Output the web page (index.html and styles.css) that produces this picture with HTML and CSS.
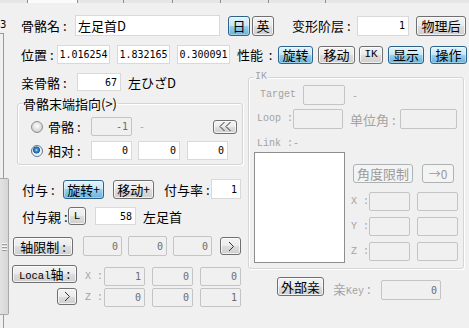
FILE: index.html
```html
<!DOCTYPE html>
<html lang="ja">
<head>
<meta charset="utf-8">
<title>骨骼</title>
<link rel="stylesheet" href="styles.css">
</head>
<body>
<div class="tabs">
  <div class="tab t0"></div><div class="tab sel t1"></div><div class="tab t2"></div><div class="tab t3"></div><div class="tab t4"></div><div class="tab t5"></div><div class="tab t6"></div><div class="tab t7"></div>
</div>
<div class="page">
  <div class="edge">
    <div class="edge-top"><span>3</span></div>
    <div class="edge-line seg-a"></div>
    <div class="edge-thumb"><i></i><i></i><i></i></div>
    <div class="edge-line seg-b"></div>
  </div>
  <div class="main">
    <div class="row r1">
      <span class="lbl l-name">骨骼名 :</span>
      <input class="tb txt w-name" value="左足首D" readonly>
      <button class="btn on b-ri">日</button>
      <button class="btn b-ei">英</button>
      <span class="lbl l-layer">变形阶层 :</span>
      <input class="tb w-layer" value="1" readonly>
      <button class="btn b-phys">物理后</button>
    </div>
    <div class="row r2">
      <span class="lbl l-pos">位置 :</span>
      <input class="tb w-pos" value="1.016254" readonly>
      <input class="tb w-pos g7" value="1.832165" readonly>
      <input class="tb w-pos g7" value="0.300091" readonly>
      <span class="lbl l-perf">性能&nbsp;&nbsp;:</span>
      <button class="btn on b-rot">旋转</button>
      <button class="btn b-mov">移动</button>
      <button class="btn b-ik">IK</button>
      <button class="btn on b-vis">显示</button>
      <button class="btn on b-op">操作</button>
    </div>
    <div class="cols">
      <div class="lcol">
        <div class="row r3">
          <span class="lbl l-parent">亲骨骼 :</span>
          <input class="tb w-parent" value="67" readonly>
          <span class="lbl after">左ひざD</span>
        </div>
        <fieldset class="grp g-tail">
          <legend>骨骼末端指向(&gt;)</legend>
          <div class="row rr1">
            <span class="radio"></span>
            <span class="lbl l-radio">骨骼 :</span>
            <input class="tb dis w41" value="-1" readonly>
            <span class="lbl dash">-</span>
            <button class="btn b-back"><svg width="14" height="11" viewBox="0 0 14 11"><path d="M6.5 1 L2 5.5 L6.5 10 M12.5 1 L8 5.5 L12.5 10" fill="none" stroke="#333" stroke-width="1"/></svg></button>
          </div>
          <div class="row rr2">
            <span class="radio checked"></span>
            <span class="lbl l-radio">相对 :</span>
            <input class="tb w41" value="0" readonly>
            <input class="tb w42 g6" value="0" readonly>
            <input class="tb w41 g7" value="0" readonly>
          </div>
        </fieldset>
        <div class="row r-fuyo">
          <span class="lbl l-fuyo">付与 :</span>
          <button class="btn on b-fr">旋转<span class="plus">+</span></button>
          <button class="btn b-fm">移动<span class="plus">+</span></button>
          <span class="lbl l-rate">付与率 :</span>
          <input class="tb w-rate" value="1" readonly>
        </div>
        <div class="row r-fpar">
          <span class="lbl l-fpar">付与親 :</span>
          <button class="btn b-l mono">L</button>
          <input class="tb w41 g9" value="58" readonly>
          <span class="lbl after">左足首</span>
        </div>
        <div class="row r-axis">
          <button class="btn b-axis">轴限制 :</button>
          <input class="tb dis w39 g10" value="0" readonly>
          <input class="tb dis w39 g6" value="0" readonly>
          <input class="tb dis w39 g6" value="0" readonly>
          <button class="btn b-next"><svg width="8" height="11" viewBox="0 0 8 11"><path d="M2 1 L6.5 5.5 L2 10" fill="none" stroke="#333" stroke-width="1"/></svg></button>
        </div>
        <div class="local">
          <div class="local-btns">
            <button class="btn b-local"><span class="btn-line"><span class="mono">Local</span>轴 :</span></button>
            <button class="btn b-lnext"><svg width="8" height="11" viewBox="0 0 8 11"><path d="M2 1 L6.5 5.5 L2 10" fill="none" stroke="#333" stroke-width="1"/></svg></button>
          </div>
          <div class="local-rows">
            <div class="row lr">
              <span class="lbl gray mono l-xyz">X :</span>
              <input class="tb dis w41" value="1" readonly>
              <input class="tb dis w41 g7" value="0" readonly>
              <input class="tb dis w41 g7" value="0" readonly>
            </div>
            <div class="row lr lr2">
              <span class="lbl gray mono l-xyz">Z :</span>
              <input class="tb dis w41" value="0" readonly>
              <input class="tb dis w41 g7" value="0" readonly>
              <input class="tb dis w41 g7" value="1" readonly>
            </div>
          </div>
        </div>
      </div>
      <div class="rcol">
        <fieldset class="grp g-ik">
          <legend class="mono">IK</legend>
          <div class="row ik-target">
            <span class="lbl gray mono l-target">Target</span>
            <input class="tb dis w42" value="" readonly>
            <span class="lbl gray dash">-</span>
          </div>
          <div class="row ik-loop">
            <span class="lbl gray mono l-loop">Loop :</span>
            <input class="tb dis w-loop" value="" readonly>
            <span class="lbl gray l-unit">单位角 :</span>
            <input class="tb dis w-unit" value="" readonly>
          </div>
          <div class="row ik-link">
            <span class="lbl gray mono l-link">Link :-</span>
          </div>
          <div class="ik-body">
            <div class="listbox"></div>
            <div class="ik-side">
              <div class="row ik-btns">
                <button class="btn off b-angle">角度限制</button>
                <button class="btn off b-zero">→0</button>
              </div>
              <div class="row ik-xyz">
                <span class="lbl gray mono l-ikx">X :</span>
                <input class="tb dis w41" value="" readonly>
                <input class="tb dis w41 g7" value="" readonly>
              </div>
              <div class="row ik-xyz">
                <span class="lbl gray mono l-ikx">Y :</span>
                <input class="tb dis w41" value="" readonly>
                <input class="tb dis w41 g7" value="" readonly>
              </div>
              <div class="row ik-xyz">
                <span class="lbl gray mono l-ikx">Z :</span>
                <input class="tb dis w41" value="" readonly>
                <input class="tb dis w41 g7" value="" readonly>
              </div>
            </div>
          </div>
        </fieldset>
        <div class="row r-ext">
          <button class="btn b-ext">外部亲</button>
          <span class="lbl gray l-key">亲<span class="mono">Key</span> :</span>
          <input class="tb dis w-key" value="0" readonly>
        </div>
      </div>
    </div>
  </div>
</div>
</body>
</html>
```

FILE: styles.css
```css
* { box-sizing: border-box; }
html, body { margin: 0; padding: 0; }
body {
  width: 469px;
  height: 328px;
  overflow: hidden;
  background: #f0f0f0;
  font-family: "Noto Sans CJK JP", "Noto Sans CJK SC", sans-serif;
  font-size: 13px;
  line-height: 1;
  color: #000;
}

/* tab strip remnants */
.tabs { display: flex; height: 3px; background: #e4e4e4; }
.tab { height: 3px; flex: none; border-left: 1px solid #8e8f8f; background: #e6e6e6; }
.t0 { width: 27px; border-left: 0; }
.t1 { width: 50px; }
.sel { background: #fbfbfb; }
.t2 { width: 46px; }
.t3 { width: 49px; }
.t4 { width: 48px; }
.t5 { width: 48px; }
.t6 { width: 57px; }
.t7 { flex: 1; }

.page { display: flex; height: 325px; }

/* left edge (list box remnant) */
.edge { width: 10px; flex: none; display: flex; flex-direction: column; }
.edge-top { height: 30px; overflow: hidden; padding-top: 17px; }
.edge-top span { display: block; font-family: "DejaVu Sans", sans-serif; font-size: 10px; }
.edge-line { width: 4px; border-right: 1px solid #9a9a9a; }
.seg-a { height: 145px; border-top: 1px solid #9a9a9a; }
.seg-b { flex: 1; }
.edge-thumb {
  width: 9px; height: 137px;
  border: 1px solid #a9a9a9; border-left: 0;
  border-radius: 0 2px 2px 0;
  background: linear-gradient(90deg, #e2e2e2, #d6d6d6);
  display: flex; flex-direction: column; align-items: center; justify-content: center; gap: 1px;
}
.edge-thumb i { display: block; width: 5px; height: 1px; background: #f6f6f6; box-shadow: 0 1px 0 #9c9c9c; margin-bottom: 1px; }

.main { flex: 1; }

.row { display: flex; align-items: center; }
.lbl { flex: none; white-space: nowrap; }
.mono { font-family: "Liberation Mono", monospace; font-size: 10px; }
.gray { color: #a3a3a3; }

/* text boxes */
.tb {
  display: block; flex: none; margin: 0;
  height: 100%;
  padding: 0 3px 0 2px;
  border: 1px solid #d9d9d9;
  background: #fff;
  font-family: "DejaVu Sans Mono", monospace;
  font-size: 10px;
  color: #000;
  text-align: right;
  outline: none;
}
.tb.txt { text-align: left; font-family: "Noto Sans CJK JP", sans-serif; font-size: 13px; padding-left: 2px; }
.tb.dis { background: #f0f0f0; border-color: #c4c4c4; border-radius: 2px; color: #6d6d6d; }

/* buttons */
.btn {
  display: flex; align-items: center; justify-content: center; flex: none;
  margin: 0; padding: 0;
  height: 100%;
  border: 1px solid #707070; border-radius: 3px;
  background: linear-gradient(#f3f3f3 0%, #ebebeb 50%, #dddddd 50%, #cfcfcf 100%);
  box-shadow: inset 0 0 0 1px rgba(255,255,255,0.7);
  font-family: "Noto Sans CJK JP", sans-serif; font-size: 13px; line-height: 1;
  color: #000;
}
.btn.on {
  border-color: #2c628b;
  background: linear-gradient(#e5f4fc 0%, #c4e5f6 50%, #98d1ef 50%, #68b3db 100%);
  box-shadow: inset 0 0 0 1px rgba(255,255,255,0.35);
}
.btn.off { border-color: #adb2b5; background: #f4f4f4; color: #9a9a9a; box-shadow: none; }
.btn.mono { font-family: "Liberation Mono", monospace; font-size: 11px; }
.btn-line { display: block; white-space: nowrap; }
.plus { font-size: 12px; }

/* gaps */
.g6 { margin-left: 6px; }
.g7 { margin-left: 7px; }
.g9 { margin-left: 9px; }
.g10 { margin-left: 10px; }
.w39 { width: 39px; }
.w41 { width: 41px; }
.w42 { width: 42px; }
.after { margin-left: 7px; }

/* row 1 */
.r1 { height: 21px; margin-top: 12px; }
.l-name { margin-left: 11px; width: 54px; }
.w-name { width: 145px; }
.b-ri { margin-left: 8px; width: 22px; height: 20px; }
.b-ei { margin-left: 2px; width: 22px; height: 20px; }
.l-layer { margin-left: 18px; width: 65px; }
.w-layer { width: 52px; height: 20px; }
.b-phys { margin-left: 7px; width: 50px; height: 20px; }

/* row 2 */
.r2 { height: 19px; margin-top: 9px; }
.l-pos { margin-left: 11px; width: 36px; }
.w-pos { width: 53px; padding: 0; text-align: center; }
.l-perf { margin-left: 7px; width: 41px; }
.r2 .btn { height: 18px; }
.b-rot { width: 35px; }
.b-mov { margin-left: 5px; width: 37px; }
.b-ik { margin-left: 4px; width: 24px; font-family: "Liberation Mono", monospace; font-size: 11px; }
.b-vis { margin-left: 5px; width: 36px; }
.b-op { margin-left: 6px; width: 37px; }

/* columns */
.cols { display: flex; align-items: flex-start; }
.lcol { width: 235px; flex: none; }
.rcol { width: 216px; flex: none; margin-left: 3px; }

/* left column */
.r3 { height: 18px; margin-top: 9px; }
.l-parent { margin-left: 11px; width: 56px; }
.w-parent { width: 44px; }

.grp {
  margin: 0; min-width: 0;
  border: 1px solid #d5d5d5; border-radius: 3px;
  box-shadow: inset 1px 1px 0 #fff, 1px 1px 0 #fff;
}
.grp legend { padding: 0 1px; line-height: 13px; }

.g-tail { margin: 6px 0 0 7px; width: 226px; padding: 7px 0 4px 0; }
.g-tail legend { margin-left: 4px; }
.rr1, .rr2 { height: 19px; }
.rr2 { margin-top: 5px; }
.radio {
  flex: none; width: 12px; height: 12px; margin-left: 13px;
  border-radius: 50%; border: 1px solid #8e8f8f;
  background: radial-gradient(circle at 50% 40%, #ffffff 0, #e6e6e6 3px, #cfcfcf 6px);
}
.radio.checked {
  border-color: #5a7a9a;
  background: radial-gradient(circle at 45% 40%, #b9e3fb 0, #3b8fd1 1.5px, #1d5a9c 3.2px, #e9e9e9 3.8px, #f7f7f7 6px);
}
.l-radio { margin-left: 5px; width: 43px; }
.dash { margin-left: 8px; color: #a3a3a3; font-size: 11px; }
.b-back { margin-left: auto; margin-right: 5px; width: 24px; height: 14px; }

.r-fuyo { height: 20px; margin-top: 14px; }
.l-fuyo { margin-left: 12px; width: 41px; }
.b-fr { width: 41px; height: 19px; }
.b-fm { margin-left: 9px; width: 41px; height: 19px; }
.l-rate { margin-left: 10px; width: 47px; }
.w-rate { width: 30px; }

.r-fpar { height: 18px; margin-top: 8px; }
.l-fpar { margin-left: 12px; width: 46px; }
.b-l { width: 18px; }

.r-axis { height: 20px; margin-top: 11px; }
.b-axis { margin-left: 3px; width: 60px; height: 19px; }
.b-next { margin-left: 8px; width: 21px; height: 18px; }

.local { display: flex; margin-top: 9px; }
.local-btns { width: 67px; flex: none; display: flex; flex-direction: column; align-items: flex-end; }
.b-local { width: 65px; height: 18px; }
.b-local .mono { font-size: 10.5px; }
.b-lnext { margin-top: 5px; width: 20px; height: 17px; }
.local-rows { margin-top: 2px; }
.lr { height: 19px; }
.lr2 { margin-top: 2px; }
.l-xyz { margin-left: 8px; width: 19px; }

/* IK group */
.g-ik { margin-top: 7px; width: 216px; height: 198px; padding: 2px 0 0 0; }
.g-ik legend { margin-left: 5px; line-height: 12px; color: #a3a3a3; font-size: 10px; }
.ik-target { height: 20px; }
.l-target { margin-left: 11px; width: 43px; }
.ik-loop { height: 20px; margin-top: 4px; }
.l-loop { margin-left: 8px; width: 36px; }
.w-loop { width: 50px; }
.l-unit { margin-left: 7px; width: 50px; }
.w-unit { width: 57px; }
.ik-link { height: 10px; margin-top: 10px; }
.l-link { margin-left: 8px; }
.ik-body { display: flex; margin-top: 3px; }
.listbox { margin-left: 5px; width: 91px; height: 111px; background: #fff; border: 1px solid #8e8e8e; flex: none; }
.ik-side { margin-left: 6px; }
.ik-btns { height: 19px; margin-top: 12px; }
.b-angle { margin-left: 2px; width: 60px; }
.b-zero { margin-left: 9px; width: 32px; font-size: 12px; }
.ik-xyz { height: 19px; margin-top: 6px; }
.ik-btns + .ik-xyz { margin-top: 9px; }
.l-ikx { width: 18px; }

.r-ext { height: 23px; margin-top: 8px; align-items: flex-start; }
.b-ext { margin-left: 29px; width: 47px; height: 19px; }
.l-key { margin-left: 9px; width: 48px; margin-top: 5px; font-size: 13px; }
.w-key { width: 60px; height: 20px; margin-top: 3px; }
```
